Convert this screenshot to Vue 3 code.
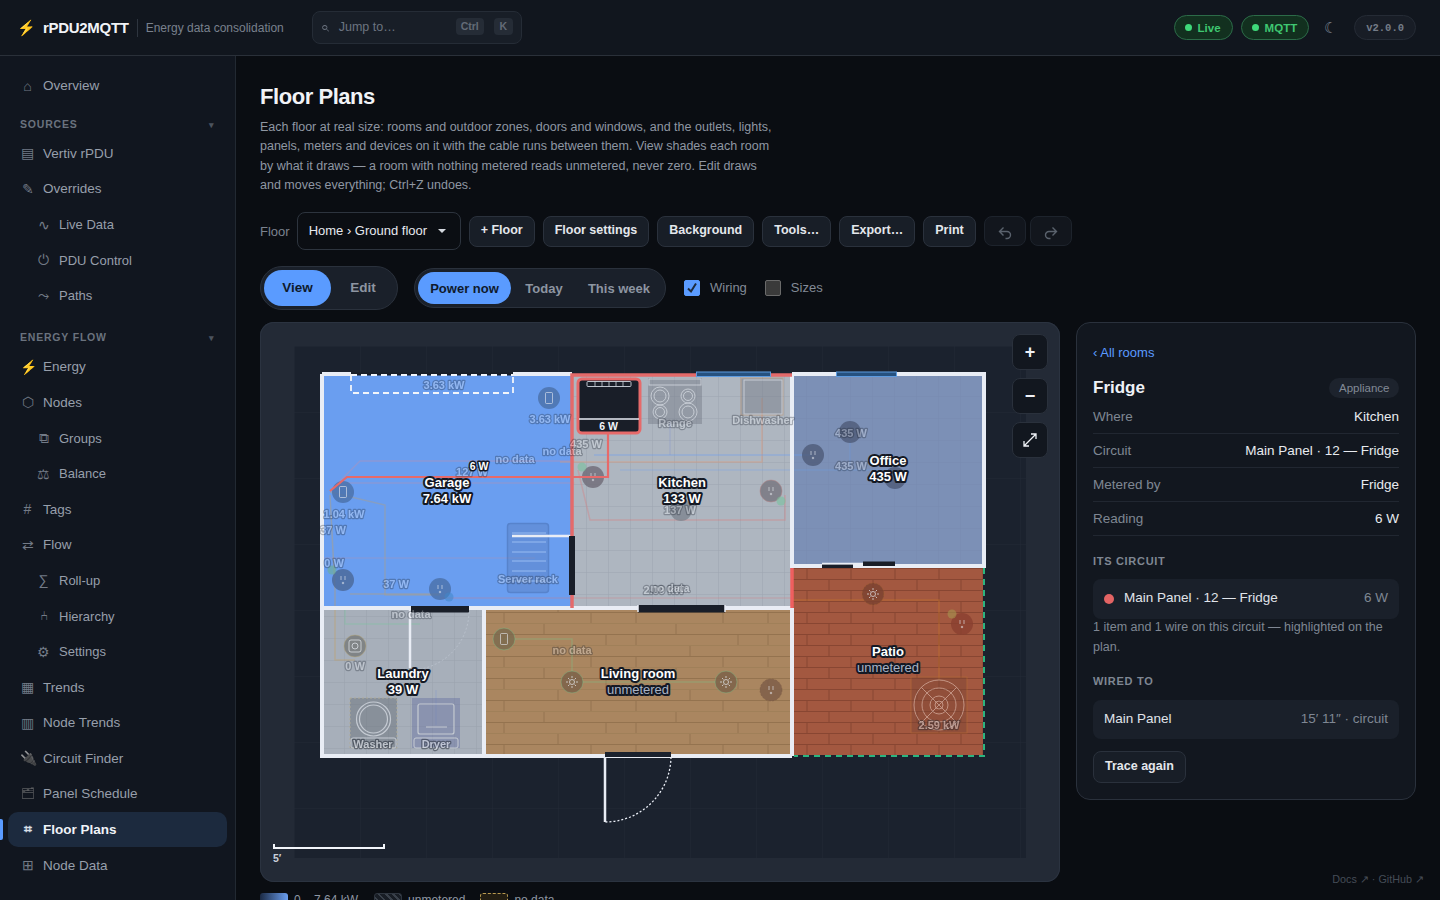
<template>
  <div class="shell">
    <header class="topbar">
      <div class="brand">
        <span class="bolt">⚡</span>
        <span class="brand-name">rPDU2MQTT</span>
        <span class="brand-sep"></span>
        <span class="brand-sub">Energy data consolidation</span>
      </div>
      <div class="jump">
        <span class="jump-icon">⌕</span>
        <span class="jump-text">Jump to…</span>
        <span class="kbd">Ctrl</span>
        <span class="kbd">K</span>
      </div>
      <div class="top-right">
        <span class="status"><i></i>Live</span>
        <span class="status"><i></i>MQTT</span>
        <span class="moon">☾</span>
        <span class="version">v2.0.0</span>
      </div>
    </header>

    <div class="layout">
      <aside class="sidebar">
        <template v-for="item in nav" :key="item.label">
          <div v-if="item.section" class="nav-section" :class="{ gap: item.gap }">
            <span>{{ item.label }}</span><span class="caret">▾</span>
          </div>
          <div v-else class="nav-item" :class="{ sub: item.sub, active: item.active }">
            <span class="nav-icon" :class="item.cls">{{ item.icon }}</span>
            <span>{{ item.label }}</span>
          </div>
        </template>
      </aside>

      <main class="main">
        <h1 class="title">Floor Plans</h1>
        <p class="intro">
          Each floor at real size: rooms and outdoor zones, doors and windows, and the outlets, lights,
          panels, meters and devices on it with the cable runs between them. View shades each room
          by what it draws — a room with nothing metered reads unmetered, never zero. Edit draws
          and moves everything; Ctrl+Z undoes.
        </p>

        <div class="toolbar">
          <span class="floor-label">Floor</span>
          <div class="select">Home › Ground floor <span class="select-caret"></span></div>
          <button v-for="b in toolButtons" :key="b" class="btn">{{ b }}</button>
          <button class="btn btn-icon">
            <svg width="16" height="16" viewBox="0 0 16 16" fill="none" stroke="currentColor" stroke-width="1.4">
              <path d="M6.500 2.500 2.500 6.500l4 4M2.500 6.500H10a3.500 3.500 0 0 1 0 7H8.500" />
            </svg>
          </button>
          <button class="btn btn-icon redo">
            <svg width="16" height="16" viewBox="0 0 16 16" fill="none" stroke="currentColor" stroke-width="1.4">
              <path d="M9.500 2.500l4 4-4 4M13.500 6.500H6a3.500 3.500 0 0 0 0 7h1.500" />
            </svg>
          </button>
        </div>

        <div class="modes">
          <div class="seg seg-big">
            <span class="seg-on">View</span>
            <span class="seg-off">Edit</span>
          </div>
          <div class="seg seg-small">
            <span class="seg-on">Power now</span>
            <span class="seg-off">Today</span>
            <span class="seg-off">This week</span>
          </div>
          <label class="check">
            <span class="box on">
              <svg width="14" height="14" viewBox="0 0 14 14" fill="none" stroke="#1d2a3c" stroke-width="2"><path d="M3 7.500l3 3 5-8" /></svg>
            </span>
            Wiring
          </label>
          <label class="check"><span class="box"></span>Sizes</label>
        </div>

        <div class="workspace">
          <div class="plan-card">
            <svg class="plan" viewBox="260 322 800 560" width="800" height="560">
              <defs>
                <pattern id="bggrid" x="294" y="346" width="66" height="66" patternUnits="userSpaceOnUse">
                  <path d="M66 0H0V66" fill="none" stroke="#2a3240" stroke-width="1" />
                </pattern>
                <pattern id="tile" x="322" y="374" width="22" height="22" patternUnits="userSpaceOnUse">
                  <path d="M22 0H0V22" fill="none" stroke="#87909c" stroke-width="1" />
                </pattern>
                <pattern id="tile2" x="322" y="374" width="22" height="22" patternUnits="userSpaceOnUse">
                  <path d="M22 0H0V22" fill="none" stroke="#6f83a8" stroke-width="1" />
                </pattern>
                <pattern id="brick" x="793" y="568" width="44" height="22" patternUnits="userSpaceOnUse">
                  <rect width="44" height="22" fill="#a35840" />
                  <path d="M0 .5H44M0 11.500H44M14 0V11M36 11V22" stroke="#884632" stroke-width="1" fill="none" />
                </pattern>
                <pattern id="wood" x="486" y="612" width="132" height="44" patternUnits="userSpaceOnUse">
                  <rect width="132" height="44" fill="#aa8660" />
                  <path d="M0 .5H132M0 22.500H132M18 0V11M105 0V11M58 11V22M18 22V33M120 22V33M72 33V44" stroke="#94734f" stroke-width="1" fill="none" />
                  <path d="M0 11.500H132M0 33.500H132" stroke="#a08059" stroke-width="1" />
                </pattern>
              </defs>

              <rect x="294" y="346" width="732" height="512" fill="#1b222e" />
              <rect x="294" y="346" width="732" height="512" fill="url(#bggrid)" opacity=".5" />

              <!-- rooms -->
              <rect x="322" y="374" width="250" height="234" fill="#6a9ef0" />
              <rect x="572" y="374" width="220" height="234" fill="#aeb6c0" />
              <rect x="572" y="374" width="220" height="234" fill="url(#tile)" opacity=".45" />
              <rect x="792" y="374" width="192" height="192" fill="#7c90b6" />
              <rect x="792" y="374" width="192" height="192" fill="url(#tile2)" opacity=".4" />
              <rect x="792" y="566" width="192" height="190" fill="url(#brick)" />
              <rect x="484" y="610" width="308" height="146" fill="url(#wood)" />
              <rect x="322" y="610" width="162" height="146" fill="#a7afba" />
              <rect x="322" y="610" width="162" height="146" fill="url(#tile)" opacity=".45" />

              <!-- faint cable runs -->
              <g fill="none" stroke-width="1.500">
                <path v-for="(w, i) in wires" :key="i" :d="w.d" :stroke="w.c" :opacity="w.o" />
              </g>

              <!-- appliances and fixtures -->
              <g opacity=".42">
                <rect x="507.500" y="523.500" width="41" height="69" rx="3" fill="#5a7fc0" stroke="#3d5f9c" stroke-width="1.500" />
                <path d="M512 533H546M512 542H546M512 552H546M512 561H546M512 571H546M512 581H546" stroke="#d9e4f5" stroke-width="1" />
                <rect x="648" y="378" width="54" height="46" fill="#6f7680" />
                <rect x="649" y="379" width="52" height="6" fill="none" stroke="#e8ecf2" stroke-width="1" />
                <g fill="none" stroke="#e8ecf2" stroke-width="1">
                  <circle cx="660" cy="396" r="9" /><circle cx="660" cy="396" r="6" />
                  <circle cx="688" cy="396" r="7" /><circle cx="688" cy="396" r="4.500" />
                  <circle cx="660" cy="412" r="7" /><circle cx="660" cy="412" r="4.500" />
                  <circle cx="688" cy="412" r="9" /><circle cx="688" cy="412" r="6" />
                </g>
                <rect x="741" y="378" width="42" height="37" fill="#6f7680" stroke="#c98a55" />
                <rect x="744" y="380" width="38" height="34" fill="none" stroke="#e8ecf2" stroke-width="1" />
                <rect x="350" y="698" width="47" height="50" fill="#5f6670" stroke="#b9a66c" stroke-dasharray="2 2" />
                <circle cx="373.500" cy="719" r="17" fill="none" stroke="#f0f3f7" stroke-width="1.200" />
                <circle cx="373.500" cy="719" r="14" fill="none" stroke="#f0f3f7" stroke-width="1.200" />
                <rect x="351" y="738" width="45" height="10" rx="2" fill="none" stroke="#f0f3f7" />
                <rect x="412" y="698" width="48" height="50" fill="#646ea0" />
                <rect x="418" y="704" width="36" height="30" rx="2" fill="none" stroke="#f0f3f7" stroke-width="1.200" />
                <path d="M426 727H447" stroke="#f0f3f7" stroke-width="1" />
                <rect x="414" y="738" width="44" height="10" rx="2" fill="none" stroke="#f0f3f7" />
                <rect x="911" y="677" width="56" height="56" fill="#7a4434" stroke="#b8702e" />
                <g fill="none" stroke="#f0e6df" stroke-width="1">
                  <circle cx="939" cy="705" r="25" /><circle cx="939" cy="705" r="17" /><circle cx="939" cy="705" r="9" /><circle cx="939" cy="705" r="4" />
                  <path d="M921 687 957 723M957 687 921 723" />
                </g>
              </g>

              <!-- devices -->
              <g v-for="(d, i) in devices" :key="'d' + i">
                <circle :cx="d.x" :cy="d.y" r="11" :fill="d.f" :stroke="d.s || 'none'" stroke-opacity=".5" :stroke-dasharray="d.dash ? '2 1.500' : null" opacity=".8" />
                <g v-if="d.t === 'plug'" fill="none" stroke="#e7ebf1" stroke-width="1" opacity=".6">
                  <path :d="`M${d.x - 2} ${d.y - 4}v4M${d.x + 2} ${d.y - 4}v4`" />
                  <circle :cx="d.x" :cy="d.y + 3" r=".8" fill="#e7ebf1" />
                </g>
                <rect v-if="d.t === 'box'" :x="d.x - 3.500" :y="d.y - 5.500" width="7" height="11" rx="1" fill="none" stroke="#e7ebf1" opacity=".6" />
                <g v-if="d.t === 'sun'" stroke="#e7ebf1" fill="none" opacity=".7">
                  <circle :cx="d.x" :cy="d.y" r="2.500" />
                  <path :d="`M${d.x} ${d.y - 6}v2M${d.x} ${d.y + 4}v2M${d.x - 6} ${d.y}h2M${d.x + 4} ${d.y}h2M${d.x - 4} ${d.y - 4}l1.500 1.500M${d.x + 2.500} ${d.y + 2.500}l1.500 1.500M${d.x + 4} ${d.y - 4}l-1.500 1.500M${d.x - 2.500} ${d.y + 2.500}l-1.500 1.500`" />
                </g>
                <rect v-if="d.t === 'square'" :x="d.x - 6" :y="d.y - 6" width="12" height="12" rx="2" fill="none" stroke="#e7ebf1" opacity=".7" />
                <circle v-if="d.t === 'square'" :cx="d.x" :cy="d.y" r="3" fill="none" stroke="#e7ebf1" opacity=".7" />
              </g>
              <g v-for="(g, i) in grounds" :key="'g' + i">
                <circle :cx="g.x" :cy="g.y" r="4.500" :fill="g.c" opacity=".55" />
              </g>

              <!-- walls -->
              <g fill="none" stroke="#e9edf5" stroke-width="4">
                <path d="M322 607V756H792M322 374H351M513 374H572M792 374H984V566H792V374" />
                <path d="M322 374V608M322 608H792M484 610V756M792 608V756" />
                <path d="M605 755V822M512 536H572" stroke-width="2.500" />
                <path d="M410 610V668" stroke-width="2.500" />
              </g>
              <path d="M572 608V375H792" fill="none" stroke="#e46a6a" stroke-width="3.500" />
              <path d="M792 568V608" fill="none" stroke="#ef5f5f" stroke-width="3.500" />
              <path d="M984 568V756H794" fill="none" stroke="#1b222e" stroke-width="2" />
              <path d="M984 568V756H794" fill="none" stroke="#2bb57f" stroke-width="2" stroke-dasharray="6 5" />

              <!-- doors and windows -->
              <g fill="#191e28">
                <rect x="351" y="372.500" width="162" height="3" />
                <rect x="569" y="536" width="6" height="59" />
                <rect x="411" y="606" width="58" height="6.500" />
                <rect x="638" y="605" width="87" height="7.500" />
                <rect x="605" y="752" width="66" height="5" fill="#1b222e" />
                <rect x="822" y="564.500" width="31" height="3.500" />
                <rect x="863" y="561.500" width="32" height="4.500" />
              </g>
              <path d="M351 375H513M351 375V393H513V375" fill="none" stroke="#f2f5fa" stroke-width="1.800" stroke-dasharray="6 4" />
              <path d="M469 612A59 59 0 0 1 410 670" fill="none" stroke="#c7ced8" stroke-width="1" stroke-dasharray="2 2" opacity=".55" />
              <path d="M671 757A66 66 0 0 1 605 822" fill="none" stroke="#e9edf5" stroke-width="1.300" stroke-dasharray="2 2" />
              <path d="M822 563.500H863M853 567H895M725 605V612M638 605V612" stroke="#e9edf5" stroke-width="1.500" fill="none" />
              <g fill="#26517f" stroke="#5d9be0" stroke-width="1">
                <rect x="696.500" y="372" width="74" height="4.500" />
                <rect x="836.500" y="372" width="60" height="4.500" />
              </g>

              <!-- highlighted wire and fridge -->
              <path d="M330 491 347 477H608V433" fill="none" stroke="#e66a6a" stroke-width="2.200" />
              <rect x="578" y="379" width="62" height="54" rx="4" fill="#191e28" stroke="#e66a6a" stroke-width="3" />
              <rect x="587" y="381.500" width="44" height="5" rx="1" fill="none" stroke="#cfd5de" stroke-width=".9" />
              <path d="M595 381.500v5M602 381.500v5M609 381.500v5M616 381.500v5M623 381.500v5" stroke="#cfd5de" stroke-width=".8" />
              <path d="M579 419H639" stroke="#e9edf5" stroke-width="1.500" />
              <text x="608.500" y="430" class="fridge-label">6 W</text>

              <!-- ghost labels -->
              <text v-for="(l, i) in ghosts" :key="'l' + i" :x="l.x" :y="l.y" class="ghost" :opacity="l.o || .3">{{ l.t }}</text>

              <text x="479" y="470" class="tiny-strong">6 W</text>

              <!-- room labels -->
              <g v-for="r in roomLabels" :key="r.name">
                <text :x="r.x" :y="r.y" class="room">{{ r.name }}</text>
                <text :x="r.x" :y="r.y + 16" :class="r.dim ? 'room dim' : 'room'">{{ r.value }}</text>
              </g>

              <!-- scale -->
              <path d="M274 844V848H384V844" fill="none" stroke="#f2f5fa" stroke-width="2" />
              <text x="273" y="862" class="scale">5′</text>
            </svg>

            <div class="zoom">
              <button class="zoom-btn">+</button>
              <button class="zoom-btn">−</button>
              <button class="zoom-btn">
                <svg width="16" height="16" viewBox="0 0 16 16" fill="none" stroke="#eef1f6" stroke-width="1.300">
                  <path d="M2 14 14 2M9 2h5v5M2 9v5h5" />
                </svg>
              </button>
            </div>
          </div>

          <aside class="detail">
            <a class="back">‹ All rooms</a>
            <div class="detail-head">
              <span class="detail-name">Fridge</span>
              <span class="pill">Appliance</span>
            </div>
            <div v-for="row in detailRows" :key="row[0]" class="detail-row">
              <span>{{ row[0] }}</span><b>{{ row[1] }}</b>
            </div>

            <h4 class="detail-title first">ITS CIRCUIT</h4>
            <div class="inset">
              <i class="dot"></i>
              <span class="inset-main">Main Panel · 12 — Fridge</span>
              <span class="inset-dim">6 W</span>
            </div>
            <p class="note">1 item and 1 wire on this circuit — highlighted on the plan.</p>

            <h4 class="detail-title">WIRED TO</h4>
            <div class="inset wired">
              <span class="inset-main">Main Panel</span>
              <span class="inset-dim">15′ 11″ · circuit</span>
            </div>
            <button class="btn trace">Trace again</button>
          </aside>
        </div>

        <div class="legend">
          <span class="sw sw-grad"></span><span>0 – 7.64 kW</span>
          <span class="sw sw-hatch"></span><span>unmetered</span>
          <span class="sw sw-dash"></span><span>no data</span>
        </div>
      </main>
    </div>

    <div class="foot">Docs ↗ · GitHub ↗</div>
  </div>
</template>

<script setup>
const nav = [
  { label: 'Overview', icon: '⌂' },
  { label: 'SOURCES', section: true },
  { label: 'Vertiv rPDU', icon: '▤' },
  { label: 'Overrides', icon: '✎' },
  { label: 'Live Data', icon: '∿', sub: true },
  { label: 'PDU Control', icon: '⏻', sub: true },
  { label: 'Paths', icon: '⤳', sub: true },
  { label: 'ENERGY FLOW', section: true, gap: true },
  { label: 'Energy', icon: '⚡', cls: 'color' },
  { label: 'Nodes', icon: '⬡' },
  { label: 'Groups', icon: '⧉', sub: true },
  { label: 'Balance', icon: '⚖', sub: true },
  { label: 'Tags', icon: '#' },
  { label: 'Flow', icon: '⇄' },
  { label: 'Roll-up', icon: '∑', sub: true },
  { label: 'Hierarchy', icon: '⑃', sub: true },
  { label: 'Settings', icon: '⚙', sub: true },
  { label: 'Trends', icon: '▦' },
  { label: 'Node Trends', icon: '▥' },
  { label: 'Circuit Finder', icon: '🔌', cls: 'mono' },
  { label: 'Panel Schedule', icon: '🗂', cls: 'mono folder' },
  { label: 'Floor Plans', icon: '⌗', active: true },
  { label: 'Node Data', icon: '⊞' },
]

const toolButtons = ['+ Floor', 'Floor settings', 'Background', 'Tools…', 'Export…', 'Print']

const wires = [
  { d: 'M330 491 360 461H575', c: '#e88', o: .25 },
  { d: 'M330 491 347 483H575', c: '#e88', o: .22 },
  { d: 'M578 470 590 520H785V495', c: '#d77', o: .35 },
  { d: 'M440 598H792', c: '#d77', o: .25 },
  { d: 'M320 558H535', c: '#d88', o: .18 },
  { d: 'M762 398V462H560', c: '#d97', o: .45 },
  { d: 'M330 492 385 505V595H440', c: '#c4a060', o: .32 },
  { d: 'M330 495 335 590V660H355', c: '#c4a060', o: .38 },
  { d: 'M350 594H440', c: '#c4a060', o: .38 },
  { d: 'M594 455H812', c: '#6a9ef0', o: .4 },
  { d: 'M620 470H895M850 440V466', c: '#6a9ef0', o: .25 },
  { d: 'M345 610V624H420', c: '#7cc4a0', o: .4 },
  { d: 'M504 639H572V682H726', c: '#7ec48c', o: .35 },
  { d: 'M792 600H939V680', c: '#c87a2a', o: .4 },
  { d: 'M670 422V455', c: '#7a8fd0', o: .25 },
  { d: 'M436 690V725', c: '#7a8fd0', o: .25 },
]

const devices = [
  { x: 549, y: 398, f: '#4a6fa8', t: 'box' },
  { x: 343, y: 492, f: '#4a6fa8', t: 'box' },
  { x: 343, y: 580, f: '#4a6696', t: 'plug' },
  { x: 440, y: 589, f: '#4a6fa8', t: 'plug' },
  { x: 593, y: 477, f: '#6e6a76', t: 'plug' },
  { x: 771, y: 491, f: '#77757e', s: '#b97c7c', t: 'plug' },
  { x: 813, y: 455, f: '#4d5a78', t: 'plug' },
  { x: 850, y: 432, f: '#4d5a78' },
  { x: 895, y: 478, f: '#4d5a78' },
  { x: 681, y: 510, f: '#7d848e' },
  { x: 355, y: 646, f: '#777a7a', s: '#b9a66c', t: 'square' },
  { x: 504, y: 639, f: '#7a6a4e', s: '#7ec48c', t: 'box' },
  { x: 572, y: 682, f: '#7a6048', s: '#7ec48c', t: 'sun' },
  { x: 726, y: 682, f: '#7a6048', s: '#7ec48c', t: 'sun' },
  { x: 771, y: 690, f: '#7d5c48', s: '#6e4f3c', dash: true, t: 'plug' },
  { x: 873, y: 594, f: '#7b4230', s: '#a56a2c', dash: true, t: 'sun' },
  { x: 962, y: 624, f: '#8a4030', t: 'plug' },
]

const grounds = [
  { x: 332, y: 570, c: '#6bb08c' },
  { x: 449, y: 597, c: '#3f86c8' },
  { x: 582, y: 467, c: '#74c29a' },
  { x: 781, y: 501, c: '#74c29a' },
  { x: 952, y: 614, c: '#a89a50' },
]

const ghosts = [
  { x: 444, y: 389, t: '3.63 kW' },
  { x: 550, y: 423, t: '3.63 kW' },
  { x: 344, y: 518, t: '1.04 kW' },
  { x: 333, y: 534, t: '37 W' },
  { x: 334, y: 567, t: '0 W' },
  { x: 396, y: 588, t: '37 W' },
  { x: 528, y: 583, t: 'Server rack' },
  { x: 515, y: 463, t: 'no data' },
  { x: 562, y: 455, t: 'no data' },
  { x: 586, y: 448, t: '435 W' },
  { x: 472, y: 476, t: '127 W' },
  { x: 675, y: 427, t: 'Range' },
  { x: 763, y: 424, t: 'Dishwasher' },
  { x: 851, y: 437, t: '435 W' },
  { x: 851, y: 470, t: '435 W' },
  { x: 680, y: 514, t: '137 W' },
  { x: 664, y: 594, t: '2.09 kW' },
  { x: 670, y: 592, t: 'no data' },
  { x: 411, y: 618, t: 'no data' },
  { x: 355, y: 670, t: '0 W' },
  { x: 373, y: 748, t: 'Washer', o: .5 },
  { x: 436, y: 748, t: 'Dryer', o: .5 },
  { x: 572, y: 654, t: 'no data' },
  { x: 939, y: 729, t: '2.59 kW', o: .42 },
]

const roomLabels = [
  { name: 'Garage', value: '7.64 kW', x: 447, y: 487 },
  { name: 'Kitchen', value: '133 W', x: 682, y: 487 },
  { name: 'Office', value: '435 W', x: 888, y: 465 },
  { name: 'Laundry', value: '39 W', x: 403, y: 678 },
  { name: 'Living room', value: 'unmetered', x: 638, y: 678, dim: true },
  { name: 'Patio', value: 'unmetered', x: 888, y: 656, dim: true },
]

const detailRows = [
  ['Where', 'Kitchen'],
  ['Circuit', 'Main Panel · 12 — Fridge'],
  ['Metered by', 'Fridge'],
  ['Reading', '6 W'],
]
</script>

<style>
html, body { margin: 0; background: #0a0d12; overflow: hidden; }
</style>

<style scoped>
.shell { position: relative; height: 900px; overflow: hidden; font-family: "Liberation Sans", Arial, sans-serif; color: #e6e9ef; background: #0a0d12; }

.topbar { height: 55px; border-bottom: 1px solid #2a3039; background: #11161e; display: flex; align-items: center; padding: 0 24px 0 17px; }
.brand { display: flex; align-items: center; }
.bolt { font-size: 15px; width: 16px; text-align: center; margin-right: 10px; color: #f3c020; }
.brand-name { font-weight: 700; font-size: 15px; letter-spacing: -.3px; color: #f1f3f7; }
.brand-sep { width: 1px; height: 18px; background: #2e353f; margin: 0 8px; }
.brand-sub { font-size: 12px; color: #79818d; }
.jump { margin-left: 28px; width: 210px; height: 33px; box-sizing: border-box; border: 1px solid #252c36; border-radius: 8px; background: #181e27; display: flex; align-items: center; padding: 0 8px 2px 9px; gap: 10px; font-size: 12.5px; color: #6c7480; }
.jump-icon { width: 7px; font-size: 15px; transform: scaleX(-1); }
.jump-text { flex: 1; }
.kbd { font-size: 10.5px; font-weight: 700; padding: 2px 5px; line-height: 13px; border-radius: 4px; background: #252c36; color: #636b77; min-width: 9px; text-align: center; }
.top-right { margin-left: auto; display: flex; align-items: center; }
.status { display: inline-flex; align-items: center; gap: 6px; height: 25px; box-sizing: border-box; padding: 0 11px 0 10px; border: 1px solid #2c6b48; border-radius: 13px; background: #12301f; color: #3fc771; font-size: 11.5px; font-weight: 700; margin-right: 8px; }
.status i { width: 7px; height: 7px; border-radius: 50%; background: #3fd97a; }
.moon { font-size: 15px; color: #7a828e; margin: 0 17px 0 7px; }
.version { height: 25px; box-sizing: border-box; padding: 0 11px; display: inline-flex; align-items: center; border: 1px solid #252b35; border-radius: 13px; background: #181d26; font-family: "Liberation Mono", monospace; font-weight: 700; font-size: 10.5px; color: #747c88; }

.layout { display: flex; height: 845px; }
.sidebar { width: 235px; flex: none; border-right: 1px solid #222932; background: #11161f; padding-top: 12px; box-sizing: content-box; }
.nav-section { height: 32px; box-sizing: border-box; padding: 0 20px 6px 20px; display: flex; align-items: flex-end; justify-content: space-between; font-size: 10.5px; font-weight: 700; letter-spacing: .8px; color: #6a727e; }
.nav-section.gap { height: 35.5px; }
.caret { font-size: 9px; color: #4c535e; letter-spacing: 0; padding-right: 1px; }
.nav-item { height: 35.6px; margin: 0 8px; padding-left: 12px; display: flex; align-items: center; font-size: 13.5px; color: #979fab; position: relative; border-radius: 10px; }
.nav-item.sub { padding-left: 28px; font-size: 13px; }
.nav-icon { width: 15px; margin-right: 8px; text-align: center; font-size: 14px; color: #737b87; flex: none; }
.nav-icon.color { color: #f3c020; }
.nav-icon.mono { filter: grayscale(1) opacity(.7); }
.nav-icon.folder { font-size: 11px; }
.nav-item.active { background: #1c2a3e; color: #f0f3f8; font-weight: 700; }
.nav-item.active .nav-icon { color: #d9dfe8; font-weight: 700; }
.nav-item.active::before { content: ""; position: absolute; left: -8px; top: 7px; bottom: 7px; width: 3px; background: #5a9bff; border-radius: 0 2px 2px 0; }

.main { flex: 1; padding: 28px 24px 0 24px; min-width: 0; position: relative; background: #0a0d12; }
.title { margin: 0; font-size: 22px; line-height: 26px; font-weight: 700; letter-spacing: -.45px; color: #f1f3f7; }
.intro { margin: 8px 0 0; width: 520px; font-size: 12.5px; line-height: 19.3px; color: #8f97a3; }
.toolbar { display: flex; align-items: center; margin-top: 17px; gap: 8px; height: 38px; }
.floor-label { font-size: 13px; color: #7b838f; margin-right: -1px; }
.select { box-sizing: border-box; width: 164px; height: 38px; border: 1px solid #2d343e; border-radius: 8px; display: flex; align-items: center; padding: 0 0 1px 11px; font-size: 13px; color: #e6e9ef; background: #0b0e13; }
.select-caret { margin-left: 11px; border-left: 4.5px solid transparent; border-right: 4.5px solid transparent; border-top: 4.5px solid #d5d9e0; }
.btn { box-sizing: border-box; height: 31px; padding: 0 11px 2px; border: 1px solid #2a313c; border-radius: 8px; background: #181e27; color: #e4e7ec; font: 700 12.500px "Liberation Sans", Arial, sans-serif; white-space: nowrap; }
.btn-icon { width: 42px; height: 30px; padding: 4px 0 0; background: #12161d; border-color: #1d232c; color: #5a626d; display: flex; align-items: center; justify-content: center; }
.btn-icon.redo { margin-left: -4px; }

.modes { display: flex; align-items: center; margin-top: 16px; height: 44px; }
.seg { box-sizing: border-box; display: flex; align-items: center; background: #1a202a; border: 1px solid #2a313c; border-radius: 24px; font-weight: 700; color: #8d95a1; }
.seg-on { background: #5a9bff; color: #0f1a2c; border-radius: 20px; display: flex; align-items: center; justify-content: center; flex: none; }
.seg-off { display: flex; align-items: center; justify-content: center; flex: none; }
.seg-big { height: 44px; width: 138px; padding: 0 3px; font-size: 13.5px; }
.seg-big .seg-on { width: 67px; height: 36px; padding-bottom: 2px; box-sizing: border-box; }
.seg-big .seg-off { width: 64px; padding-bottom: 2px; }
.seg-small { height: 40px; width: 252px; margin-left: 16px; padding: 0 3px; font-size: 13px; }
.seg-small .seg-on { width: 93px; height: 32px; }
.seg-small .seg-off:nth-child(2) { width: 66px; }
.seg-small .seg-off:nth-child(3) { width: 78px; margin-left: 3px; }
.check { display: flex; align-items: center; gap: 10px; font-size: 13px; color: #828a96; margin-top: -1px; }
.check:first-of-type { margin-left: 18px; margin-right: 18px; }
.box { box-sizing: border-box; width: 16px; height: 16px; border-radius: 2px; background: #3a3a3a; border: 1px solid #6a6a6a; display: flex; align-items: center; justify-content: center; }
.box.on { background: #5a9bff; border-color: #5a9bff; }

.workspace { display: flex; gap: 16px; align-items: flex-start; margin-top: 12px; }
.plan-card { position: relative; width: 800px; height: 560px; background: #232a36; border-radius: 14px; overflow: hidden; flex: none; box-shadow: inset 0 0 0 1px #2b3340; }
.plan { display: block; }
.zoom { position: absolute; top: 12px; right: 12px; display: flex; flex-direction: column; gap: 8px; }
.zoom-btn { box-sizing: border-box; width: 36px; height: 36px; border-radius: 8px; background: #12171f; border: 1px solid #2a313c; color: #eef1f6; font: 700 18px "Liberation Sans", Arial, sans-serif; display: flex; align-items: center; justify-content: center; padding: 0; }

.ghost { font: 700 11px "Liberation Sans", Arial, sans-serif; text-anchor: middle; fill: #f2f5fa; stroke: #1b222e; stroke-width: 2.5px; paint-order: stroke; stroke-linejoin: round; }
.room { font: 700 13px "Liberation Sans", Arial, sans-serif; text-anchor: middle; fill: #fff; stroke: #141924; stroke-width: 4px; paint-order: stroke; stroke-linejoin: round; }
.room.dim { font-weight: 400; fill: #a9b3c4; }
.fridge-label { font: 700 10.500px "Liberation Sans", Arial, sans-serif; text-anchor: middle; fill: #f2f5fa; }
.tiny-strong { font: 700 10.500px "Liberation Sans", Arial, sans-serif; text-anchor: middle; fill: #fff; stroke: #141924; stroke-width: 3px; paint-order: stroke; stroke-linejoin: round; }
.scale { font: 700 10.500px "Liberation Sans", Arial, sans-serif; fill: #c9d0da; }

.detail { box-sizing: border-box; width: 340px; height: 478px; flex: none; background: #12171f; border: 1px solid #2a313c; border-radius: 14px; padding: 22px 16px 0; }
.back { display: block; font-size: 13px; line-height: 15px; color: #5a9bff; }
.detail-head { display: flex; align-items: center; justify-content: space-between; margin-top: 17px; height: 21px; }
.detail-name { font-size: 17px; font-weight: 700; color: #eef1f6; }
.pill { font-size: 11.500px; color: #828a96; background: #1d232d; border-radius: 11px; padding: 4px 9.500px; }
.detail-row { display: flex; justify-content: space-between; align-items: center; height: 34px; box-sizing: border-box; border-bottom: 1px solid #212731; font-size: 13.5px; color: #7f8793; }
.detail-row b { font-weight: 400; color: #e8ebf0; }
.detail-head + .detail-row { margin-top: 2px; }
.detail-title { margin: 17px 0 0; font-size: 11px; line-height: 14px; font-weight: 700; letter-spacing: .7px; color: #7f8793; }
.detail-title.first { margin-top: 18px; }
.inset { box-sizing: border-box; margin-top: 11px; height: 40px; display: flex; align-items: center; background: #1a202a; border-radius: 8px; padding: 0 11px; font-size: 13.5px; }
.inset.wired { margin-top: 12px; height: 39px; }
.inset-main { flex: 1; color: #e0e4ea; margin-bottom: 3px; }
.inset-dim { color: #7f8793; margin-bottom: 3px; }
.dot { width: 10px; height: 10px; border-radius: 50%; background: #e36464; margin-right: 10px; }
.note { margin: -1px 0 0; font-size: 12.500px; line-height: 19.500px; color: #7f8793; }
.trace { display: block; margin-top: 12px; height: 32px; }

.legend { margin-top: 11px; display: flex; align-items: center; font-size: 12px; color: #8f97a3; }
.sw { width: 28px; height: 14px; border-radius: 3px; box-sizing: border-box; margin-right: 6px; }
.sw-grad { background: linear-gradient(90deg, #1b2a44, #6a9ef0); }
.sw-hatch { margin-left: 16px; background: repeating-linear-gradient(45deg, #39404a, #39404a 2px, #181d25 2px, #181d25 5px); border: 1px solid #2e353f; }
.sw-dash { margin-left: 15px; border: 1px dashed #b89a50; background: #221d12; }

.foot { position: absolute; right: 16px; top: 873px; font-size: 10.800px; color: #454c57; }
</style>
